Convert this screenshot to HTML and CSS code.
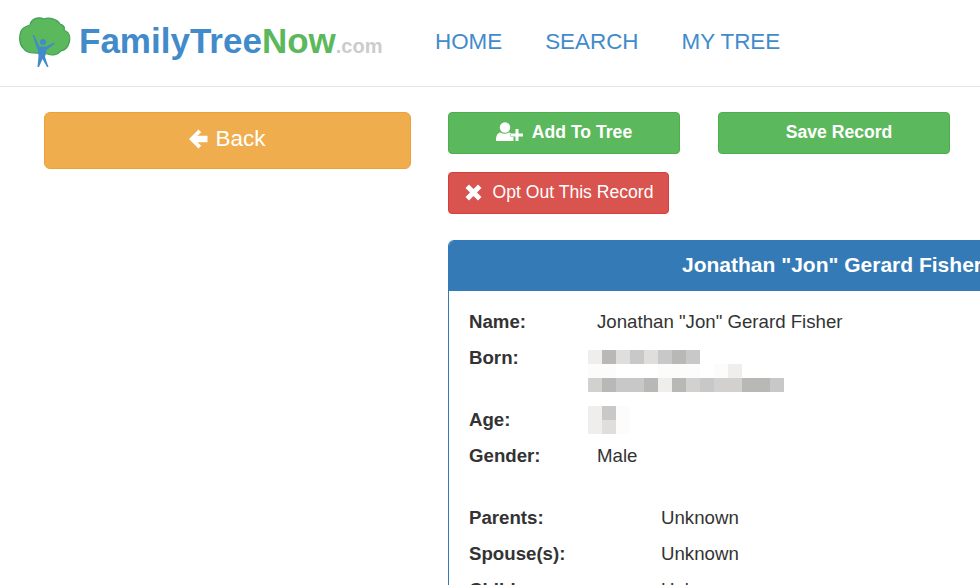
FILE: index.html
```html
<!DOCTYPE html>
<html lang="en">
<head>
  <meta charset="UTF-8" />
  <meta name="viewport" content="width=device-width, initial-scale=1" />
  <title>Jonathan "Jon" Gerard Fisher - FamilyTreeNow.com</title>
  <link rel="stylesheet" href="styles.css">
</head>
<body>

  <header class="topbar">
    <a href="#" class="brand">
      <svg class="brand-mark" width="52" height="52" viewBox="0 0 52 52" aria-hidden="true">
        <path d="M11 9C12 3 19 0 25 3C30 1 38 3 41 8C45 9 46 12 45 14C50 16 52 21 50 27C49 31 46 34 42 35C39 39 33 40 29 38L15 37C10 37 6 35 4 32C0 28 0 20 2 15C4 11 8 10 11 9Z" fill="#5cb85c" stroke="#3f9f55" stroke-width="1.200"/>
        <circle cx="24" cy="26" r="3" fill="#428bca"/>
        <path d="M13.500 19L15 19L20.500 30.500L27 30.500L35 26.500L35.500 28L27.500 34L26 41L29.500 51L28 51L23.500 43L20 51L18.500 51L19.500 40L19 35Z" fill="#428bca"/>
      </svg>
      <span class="brand-name">Family<span class="brand-tree">Tree</span><span class="brand-now">Now</span><span class="brand-tld">.com</span></span>
    </a>
    <nav class="nav" aria-label="Main navigation">
      <a href="#" class="nav-link">HOME</a>
      <a href="#" class="nav-link">SEARCH</a>
      <a href="#" class="nav-link">MY TREE</a>
    </nav>
  </header>

  <main class="content">
    <div class="col-side">
      <a href="#" class="btn btn-back">
        <svg class="icon" width="19" height="20" viewBox="0 0 19 20" aria-hidden="true">
          <path d="M9.500.5 0 10l9.500 9.500 2.700-2.700L8.500 13.300H18.500V6.700H8.500l3.700-3.500z" fill="#fff"/>
        </svg>
        Back
      </a>
    </div>

    <div class="col-record">
      <div class="actions">
        <a href="#" class="btn btn-green">
          <svg class="icon" width="27" height="20" viewBox="0 0 27 20" aria-hidden="true">
            <circle cx="9" cy="5.500" r="5.200" fill="#fff"/>
            <path d="M0 19c-.4-5 1.500-8 4.500-8.500 2.500 1.600 6 1.600 8.500 0 2.500.4 4 2 4.500 4V19z" fill="#fff"/>
            <path d="M19.500 7h3v4.500H27v3h-4.500V19h-3v-4.500H15v-3h4.500z" fill="#fff" stroke="#5cb85c" stroke-width="1" paint-order="stroke"/>
          </svg>
          Add To Tree
        </a>
        <a href="#" class="btn btn-green btn-save">Save Record</a>
        <a href="#" class="btn btn-red">
          <svg class="icon" width="17" height="17" viewBox="0 0 17 17" aria-hidden="true">
            <path d="M4 .5 8.500 5 13 .5 16.500 4 12 8.500 16.500 13 13 16.500 8.500 12 4 16.500.5 13 5 8.500.5 4z" fill="#fff"/>
          </svg>
          Opt Out This Record
        </a>
      </div>

      <section class="card">
        <h1 class="card-title">Jonathan "Jon" Gerard Fisher</h1>
        <div class="card-body">
          <dl class="facts">
            <dt>Name:</dt>
            <dd>Jonathan "Jon" Gerard Fisher</dd>
            <dt>Born:</dt>
            <dd class="hidden-value hidden-born">
              <div class="pixels">
                <i class="s1"></i><i class="s5"></i><i class="s2"></i><i class="s4"></i><i class="s2"></i><i class="s4"></i><i class="s5"></i><i class="s4"></i>
              </div>
              <div class="pixels">
                <i class="s0"></i><i class="s0"></i><i></i><i></i><i></i><i class="s0"></i><i class="s0"></i><i class="s0"></i><i></i><i class="s0"></i><i class="s1"></i>
              </div>
              <div class="pixels">
                <i class="s3"></i><i class="s5"></i><i class="s4"></i><i class="s4"></i><i class="s5"></i><i class="s1"></i><i class="s5"></i><i class="s3"></i><i class="s4"></i><i class="s3"></i><i class="s3"></i><i class="s5"></i><i class="s5"></i><i class="s4"></i>
              </div>
            </dd>
            <dt>Age:</dt>
            <dd class="hidden-value hidden-age">
              <div class="pixels">
                <i class="s1"></i><i class="s4"></i><i class="s0"></i>
              </div>
              <div class="pixels">
                <i class="s1"></i><i class="s2"></i><i class="s0"></i>
              </div>
            </dd>
            <dt>Gender:</dt>
            <dd>Male</dd>
          </dl>
          <dl class="facts facts-family">
            <dt>Parents:</dt>
            <dd>Unknown</dd>
            <dt>Spouse(s):</dt>
            <dd>Unknown</dd>
            <dt>Children:</dt>
            <dd>Unknown</dd>
          </dl>
        </div>
      </section>
    </div>
  </main>

</body>
</html>
```

FILE: styles.css
```css
/* Reset */
* {
  box-sizing: border-box;
  margin: 0;
  padding: 0;
}
html, body {
  height: 585px;
  overflow: hidden;
}
body {
  background-color: #fff;
  color: #333;
  font-family: 'Liberation Sans', Arial, sans-serif;
  font-size: 18.67px;
}
a {
  color: inherit;
  text-decoration: none;
}

/* Header */
.topbar {
  height: 87px;
  border-bottom: 1px solid #e7e7e7;
  display: flex;
  align-items: center;
  padding: 0 0 2px 19px;
}
.brand {
  display: flex;
  align-items: center;
  width: 416px;
  gap: 8px;
}
.brand-mark {
  flex: none;
}
.brand-name {
  font-size: 35px;
  font-weight: 700;
  color: #428bca;
  white-space: nowrap;
  padding-bottom: 3px;
}
.brand-now {
  color: #5cb85c;
}
.brand-tld {
  font-size: 20px;
  color: #ccc;
}
.nav {
  display: flex;
  gap: 43px;
}
.nav-link {
  font-size: 22.4px;
  color: #428bca;
}

/* Layout */
.content {
  display: flex;
  padding: 25px 0 0 44px;
  gap: 37px;
}
.col-side {
  width: 367px;
  flex: none;
}
.col-record {
  flex: none;
  width: 768px;
}

/* Buttons */
.btn {
  display: flex;
  align-items: center;
  justify-content: center;
  color: #fff;
  border: 1px solid transparent;
  border-radius: 4px;
  white-space: nowrap;
  font-size: 17.6px;
}
.btn-back {
  height: 57px;
  font-size: 22.5px;
  gap: 7px;
  padding-bottom: 3px;
  background-color: #f0ad4e;
  border-color: #eea236;
  border-radius: 6px;
}
.actions {
  display: grid;
  grid-template-columns: 232px 232px;
  column-gap: 38px;
  row-gap: 18px;
  justify-items: start;
  margin-bottom: 26px;
}
.btn-green,
.btn-red {
  height: 42px;
  padding-bottom: 2px;
}
.btn-green {
  width: 232px;
  gap: 9px;
  background-color: #5cb85c;
  border-color: #4cae4c;
  font-weight: 700;
}
.btn-save {
  padding-left: 10px;
}
.btn-red {
  width: 221px;
  gap: 10px;
  padding-left: 2px;
  background-color: #d9534f;
  border-color: #d43f3a;
}

/* Record card */
.card {
  border: 1px solid #337ab7;
  border-bottom: none;
  border-radius: 6px 6px 0 0;
}
.card-title {
  background-color: #337ab7;
  border-radius: 5px 5px 0 0;
  color: #fff;
  height: 50px;
  font-size: 21px;
  font-weight: 700;
  line-height: 48px;
  text-align: center;
}
.card-body {
  padding: 18px 20px;
}
.facts {
  display: grid;
  grid-template-columns: 128px 1fr;
  row-gap: 10px;
  line-height: 26px;
}
.facts dt {
  font-weight: 700;
}
.facts-family {
  grid-template-columns: 192px 1fr;
  margin-top: 36px;
}
.hidden-value {
  margin-left: -9px;
  height: 26px;
}
.hidden-born {
  height: 52px;
  padding-top: 5px;
}
.hidden-age {
  margin-top: -1px;
}

/* Blurred-out values */
.pixels {
  display: flex;
  height: 14px;
}
.pixels i {
  display: block;
  width: 14px;
  height: 14px;
}
.s0 { background-color: #fcfcfc; }
.s1 { background-color: #f0eeec; }
.s2 { background-color: #e0dedd; }
.s3 { background-color: #d2d1cf; }
.s4 { background-color: #c8c8c8; }
.s5 { background-color: #b8b8b7; }
```
